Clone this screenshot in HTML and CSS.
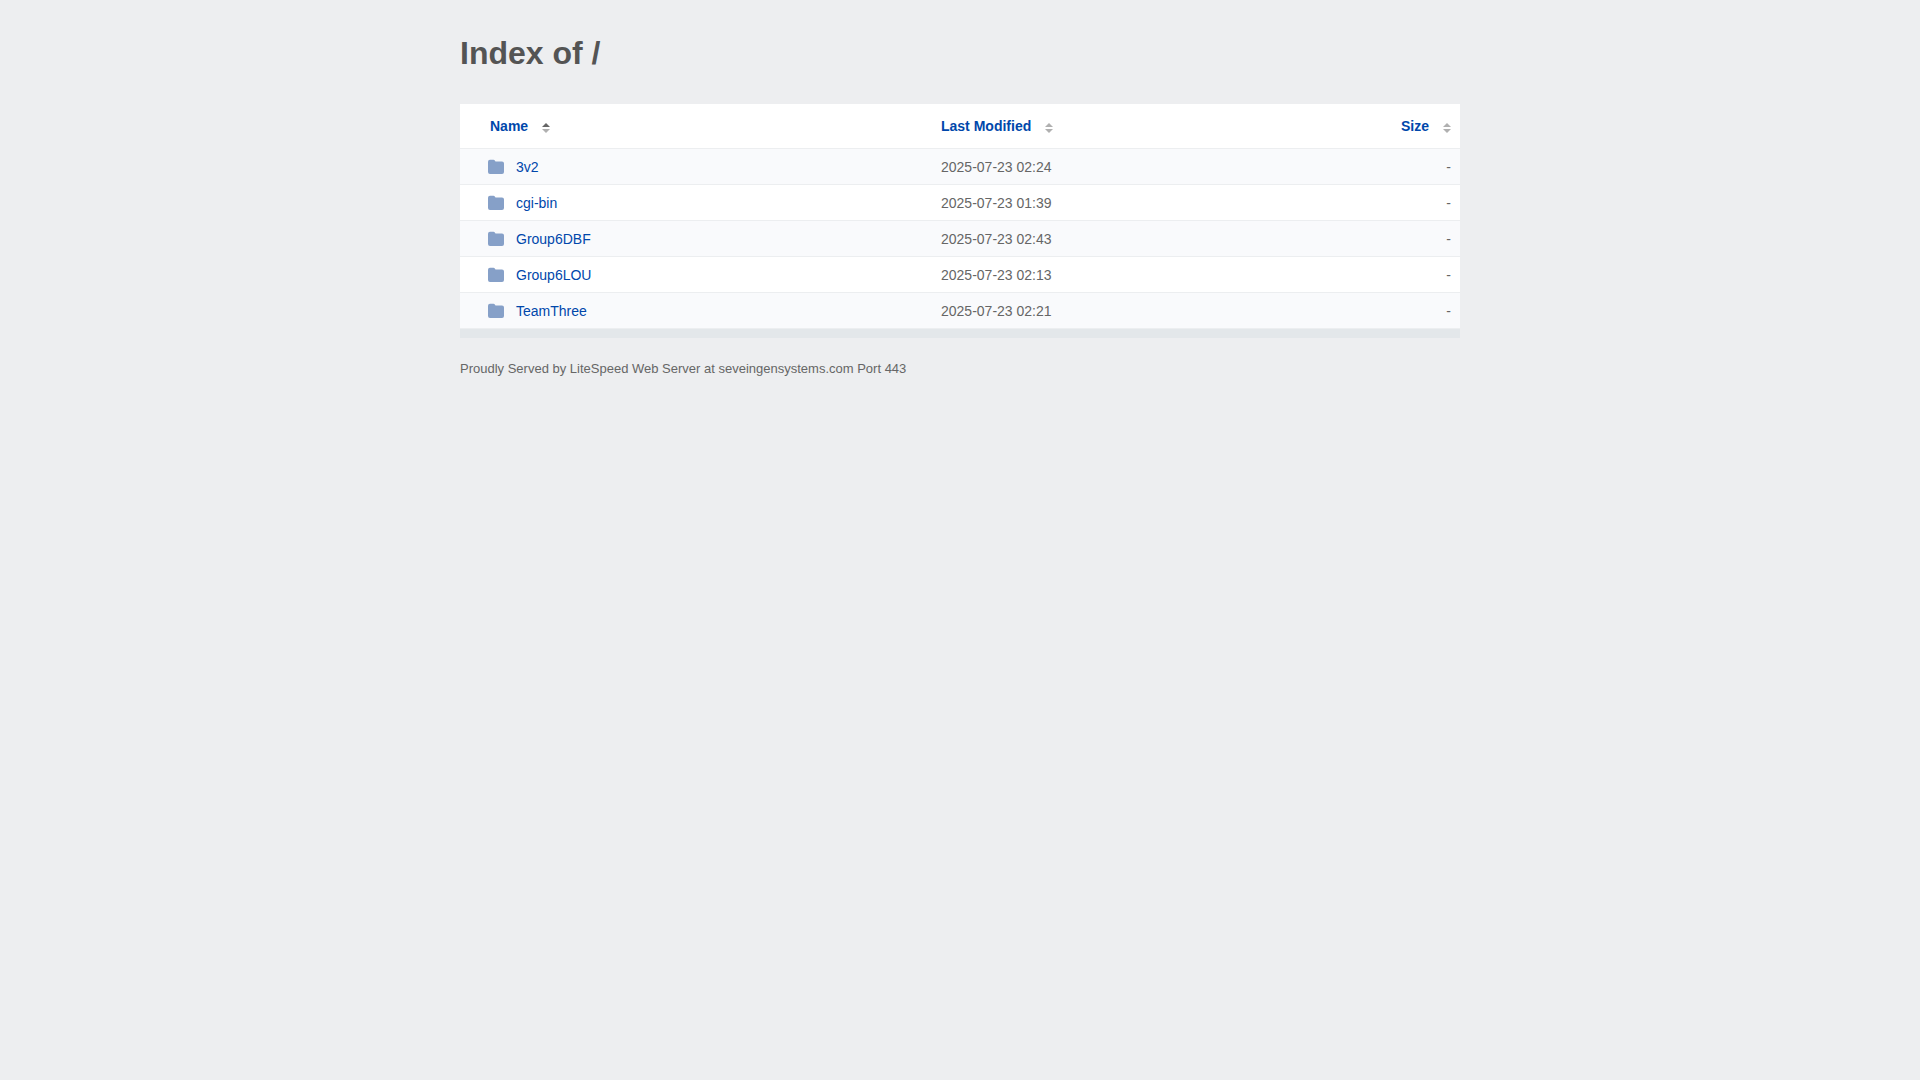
FILE: index.html
```
<!DOCTYPE html>
<html lang="en">

<head>
    <meta charset="UTF-8">
    <meta name="viewport" content="width=device-width, initial-scale=1">
    <title>Index of /</title>
    <link rel="stylesheet" href="styles.css">
</head>

<body>
    <!-- icon shapes -->
    <svg class="sprite" aria-hidden="true">
        <symbol id="folder" viewBox="0 0 16 16">
            <path d="M2 .8h3.500a1.500 1.500 0 0 1 1.300.8L7.500 2.500H14a2 2 0 0 1 2 2V13a2 2 0 0 1-2 2H2a2 2 0 0 1-2-2V2.800a2 2 0 0 1 2-2z"/>
        </symbol>
        <symbol id="sort" viewBox="0 0 8 10">
            <path fill="currentColor" d="M4 0l4 4H0z"/>
            <path d="M0 6h8l-4 4z"/>
        </symbol>
    </svg>
    <div class="content">
        <h1>Index of /</h1>
        <table id="table-list">
            <thead>
                <tr>
                    <th class="name"><a href="#">Name</a><svg class="sort asc" aria-hidden="true"><use href="#sort"/></svg></th>
                    <th class="date"><a href="#">Last Modified</a><svg class="sort" aria-hidden="true"><use href="#sort"/></svg></th>
                    <th class="size"><a href="#">Size</a><svg class="sort" aria-hidden="true"><use href="#sort"/></svg></th>
                </tr>
            </thead>
            <tbody>
                <tr>
                    <td class="name"><a href="#"><svg class="folder" aria-hidden="true"><use href="#folder"/></svg>3v2</a></td>
                    <td class="date">2025-07-23 02:24</td>
                    <td class="size">-</td>
                </tr>
                <tr>
                    <td class="name"><a href="#"><svg class="folder" aria-hidden="true"><use href="#folder"/></svg>cgi-bin</a></td>
                    <td class="date">2025-07-23 01:39</td>
                    <td class="size">-</td>
                </tr>
                <tr>
                    <td class="name"><a href="#"><svg class="folder" aria-hidden="true"><use href="#folder"/></svg>Group6DBF</a></td>
                    <td class="date">2025-07-23 02:43</td>
                    <td class="size">-</td>
                </tr>
                <tr>
                    <td class="name"><a href="#"><svg class="folder" aria-hidden="true"><use href="#folder"/></svg>Group6LOU</a></td>
                    <td class="date">2025-07-23 02:13</td>
                    <td class="size">-</td>
                </tr>
                <tr>
                    <td class="name"><a href="#"><svg class="folder" aria-hidden="true"><use href="#folder"/></svg>TeamThree</a></td>
                    <td class="date">2025-07-23 02:21</td>
                    <td class="size">-</td>
                </tr>
            </tbody>
        </table>
        <footer>Proudly Served by LiteSpeed Web Server at seveingensystems.com Port 443</footer>
    </div>
</body>

</html>
```
FILE: styles.css
```
* {
    margin: 0;
    padding: 0;
    box-sizing: border-box;
}

body {
    background-color: #edeef0;
    color: #666;
    font-family: 'Liberation Sans', Arial, Helvetica, sans-serif;
    font-size: 14px;
    line-height: 18px;
}

a {
    color: #0047ab;
    text-decoration: none;
}

a:hover {
    text-decoration: underline;
}

.sprite {
    display: none;
}

.content {
    max-width: 1000px;
    margin: 0 auto;
}

h1 {
    padding: 33px 0 31px;
    color: #545454;
    font-size: 32px;
    line-height: 40px;
}

/* file list */
#table-list {
    width: 100%;
    table-layout: fixed;
    border-collapse: separate;
    border-spacing: 0;
    background-color: #fff;
    border-bottom: 9px solid #e3e7ea;
}

th,
td {
    padding: 8px 9px;
    text-align: left;
    border-bottom: 1px solid #eceef0;
}

th {
    height: 45px;
}

td {
    height: 36px;
}

th.name {
    width: 47%;
    padding-left: 30px;
}

td.name {
    padding-left: 28px;
}

.date {
    width: 33%;
    padding-left: 11px;
}

.size {
    width: 20%;
    text-align: right;
}

tbody tr:nth-child(odd) {
    background-color: #f9fafc;
}

td.name a {
    display: flex;
    align-items: center;
    gap: 12px;
}

.folder {
    width: 16px;
    height: 16px;
    fill: #86a0c8;
}

.sort {
    width: 8px;
    height: 10px;
    margin-left: 14px;
    vertical-align: -2px;
    color: #b0b0b0;
    fill: #b0b0b0;
}

.asc {
    color: #666;
}
/* file list end */

footer {
    padding: 22px 0;
    font-size: 13px;
}
```
